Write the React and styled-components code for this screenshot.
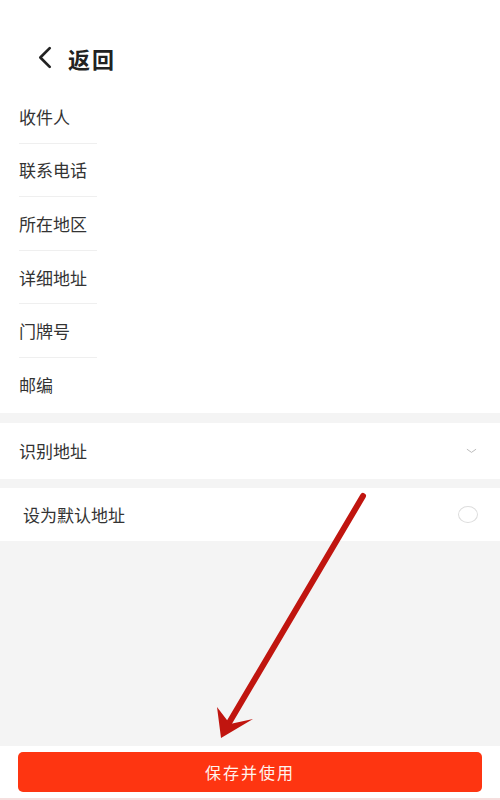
import React from 'react';
import styled, { createGlobalStyle } from 'styled-components';

const GlobalStyle = createGlobalStyle`
  html, body {
    margin: 0;
    padding: 0;
    background: #f4f4f4;
  }
  body {
    font-family: "Noto Sans CJK SC", "Noto Sans", sans-serif;
  }
`;

const fields = ['收件人', '联系电话', '所在地区', '详细地址', '门牌号', '邮编'];

class App extends React.Component {
    render() {
        return (
            <Page>
                <GlobalStyle />
                <Header>
                    <BackIcon viewBox="0 0 16 24">
                        <path d="M13 3 L4 12 L13 21" />
                    </BackIcon>
                    <HeaderTitle>返回</HeaderTitle>
                </Header>

                <FormCard>
                    {fields.map((f, i) => (
                        <FieldRow key={f} last={i === fields.length - 1}>
                            <Label>{f}</Label>
                        </FieldRow>
                    ))}
                </FormCard>

                <Section>
                    <Label>识别地址</Label>
                    <ChevronDown viewBox="0 0 12 6">
                        <path d="M1 1 L6 4.5 L11 1" />
                    </ChevronDown>
                </Section>

                <Section short>
                    <Label indent>设为默认地址</Label>
                    <Radio />
                </Section>

                <Spacer />

                <Footer>
                    <SaveButton>保存并使用</SaveButton>
                </Footer>
                <BottomLine />

                <Arrow viewBox="0 0 500 800">
                    <line x1="363" y1="496" x2="226" y2="728" stroke="#c0150f" strokeWidth="6" strokeLinecap="round" />
                    <polygon points="221,738 217,707 230,724 253,719" fill="#c0150f" />
                </Arrow>
            </Page>
        );
    }
}

const Page = styled.div`
    position: relative;
    width: 500px;
    height: 800px;
    display: flex;
    flex-direction: column;
    background: #f4f4f4;
    overflow: hidden;
`;

const Header = styled.div`
    height: 100px;
    box-sizing: border-box;
    padding: 45px 0 0 36px;
    display: flex;
    align-items: flex-start;
    gap: 15px;
    background: #fff;
`;

const BackIcon = styled.svg`
    width: 17px;
    height: 25px;
    fill: none;
    stroke: #222;
    stroke-width: 2.6;
    stroke-linecap: round;
    stroke-linejoin: round;
`;

const HeaderTitle = styled.span`
    font-size: 22px;
    font-weight: 700;
    color: #222;
    line-height: 26px;
    letter-spacing: 2px;
`;

const FormCard = styled.div`
    background: #fff;
    padding: 0 0 1px 19px;
    margin-top: -10px;
`;

const FieldRow = styled.div`
    width: 78px;
    height: 53.6px;
    box-sizing: border-box;
    display: flex;
    align-items: center;
    border-bottom: 1px solid ${p => (p.last ? 'transparent' : '#efefef')};
`;

const Label = styled.span`
    font-size: 17px;
    color: #333;
    white-space: nowrap;
    padding-left: ${p => (p.indent ? '4px' : '0')};
`;

const Section = styled.div`
    margin-top: ${p => (p.short ? '9px' : '10px')};
    height: ${p => (p.short ? '53px' : '56px')};
    background: #fff;
    display: flex;
    align-items: center;
    justify-content: space-between;
    padding: 0 22px 0 19px;
`;

const ChevronDown = styled.svg`
    width: 11px;
    height: 6px;
    margin-right: 1px;
    fill: none;
    stroke: #b5b5b5;
    stroke-width: 1;
`;

const Radio = styled.div`
    width: 18px;
    height: 15px;
    border: 1.5px solid #ddd;
    border-radius: 50%;
`;

const Spacer = styled.div`
    flex: 1;
`;

const Footer = styled.div`
    height: 52px;
    background: #fff;
    padding: 6px 18px 0;
    box-sizing: border-box;
`;

const SaveButton = styled.button`
    width: 100%;
    height: 40px;
    border: none;
    border-radius: 5px;
    background: #fe3511;
    color: #fff3ee;
    font-family: "Noto Sans CJK SC", sans-serif;
    font-size: 16px;
    letter-spacing: 2px;
`;

const BottomLine = styled.div`
    height: 2px;
    background: #f6dede;
`;

const Arrow = styled.svg`
    position: absolute;
    left: 0;
    top: 0;
    width: 500px;
    height: 800px;
    pointer-events: none;
`;

export default App;
